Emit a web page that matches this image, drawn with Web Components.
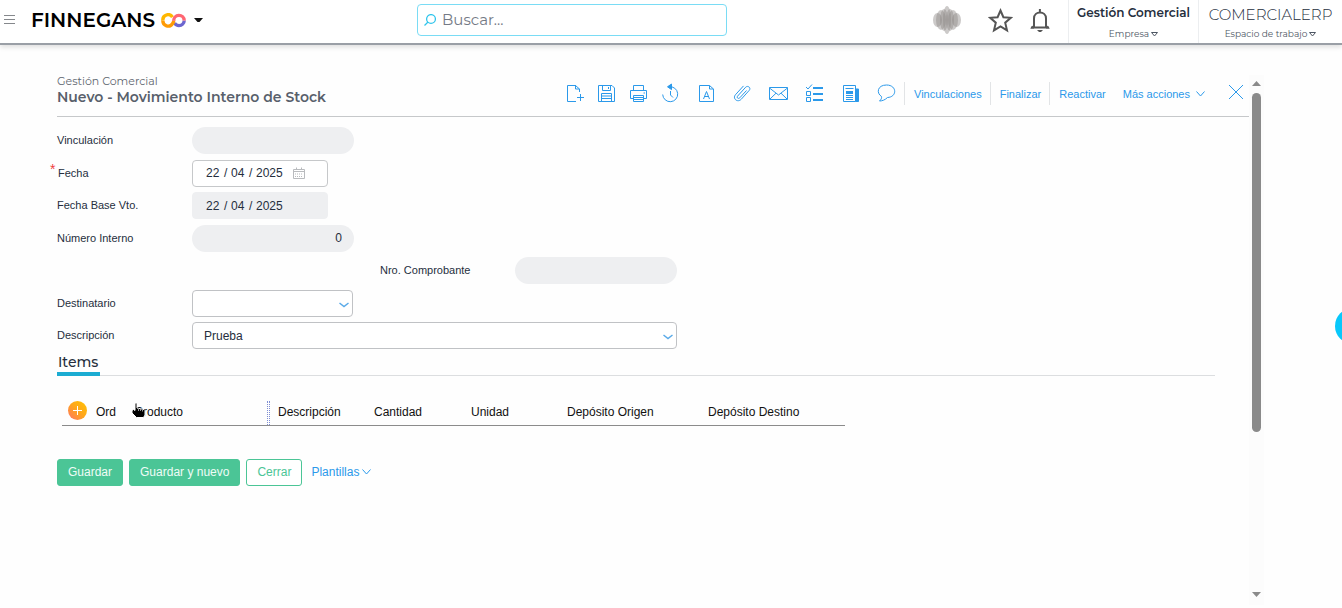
<!DOCTYPE html>
<html lang="es">
<head>
<meta charset="utf-8">
<title>Nuevo - Movimiento Interno de Stock</title>
<style>
  html, body { margin: 0; height: 100%; }
  body {
    --brand: Montserrat, Inter, "Open Sans", sans-serif;
    --ink: #252e3d;
    --blue: #2b99ea;
    --green: #4bc596;
    --line: #c6c8ca;
    --soft: #eeeff1;
    font: 12px/16px "Liberation Sans", Arial, sans-serif;
    color: var(--ink);
    background: #fefefe;
    overflow: hidden;
  }
</style>
</head>
<body>
<erp-app></erp-app>

<script>
const define = (name, html, setup) => {
  const template = document.createElement('template');
  template.innerHTML = html;
  customElements.define(name, class extends HTMLElement {
    constructor() {
      super();
      this.attachShadow({ mode: 'open' }).append(template.content.cloneNode(true));
    }
    connectedCallback() { if (setup) setup(this, this.shadowRoot); }
  });
};

const ICONS = {
  'new': '<path d="M14.500 8V5L10.500 1.500H2.500V17.500H11M10.500 1V5H14.500M15.500 10V17M12 13.500H19"/>',
  save: '<path d="M1.500 1.500H15L17.500 4V17.500H1.500ZM5.500 1.500V6.500H13.500V1.500M11.500 3V5M4.500 17V9.500H14.500V17M5 12H14M5 14.500H14"/>',
  print: '<path d="M4.500 6.500V1.500H14.500V6.500M4.500 14.500H1.500V6.500H17.500V14.500H14.500M4.500 11.500H14.500V17.500H4.500ZM5 13.500H14M5 15.500H14M14.500 9H16"/>',
  history: '<path d="M8 2.800A7.500 7.500 0 1 1 1.700 10.500M9.500 7V11L12 13.500"/><path d="M10.500 0L6.500 2.800L10.500 5.600Z" fill="currentColor"/>',
  font: '<path d="M2.500 1.500H12.500L16.500 5V17.500H2.500ZM12.500 1.500V5H16.500M6.500 15L9.500 7.500L12.500 15M7.500 12.500H11.500"/>',
  clip: '<path d="M13.500 6.500L6.800 13.800C5.200 15.400 3.300 13.600 4.700 12L12.700 3.200C15 1 18.300 4 16.200 6.400L8.200 15.300C4.700 19 -.800 14.700 2.400 10.800L10.500 1.900"/>',
  mail: '<path d="M.500 3.500H18.500V15.500H.500ZM.500 4L9.500 11L18.500 4M1 15L7 9.200M18 15L12 9.200"/>',
  list: '<path d="M1 3L3 5L7 .500M1.500 7.500H5.500V11.500H1.500ZM1.500 13.500H5.500V17.500H1.500Z"/><path d="M8 4H18M8 10H18M8 16H18" stroke-width="2"/>',
  news: '<path d="M2.500 1.500H14.500V17.500H2.500ZM4.500 4.500H12.500M5 11.500H12M5 13.500H12M5 15.500H12"/><path d="M5 8.500H12" stroke-width="3"/><path d="M15 5H17.500V17.500H14.500" fill="currentColor"/>',
  chat: '<path d="M4.500 12.500C-1 9 .500 1 9.500 1C20 1 20.500 13 10.500 13.500C8 16 5 17 2.500 17C4.300 15.500 4.800 14 4.500 12.500Z"/>'
};

define('tool-button', `
<style>
  :host { display: block; }
  button { display: grid; place-items: center; width: 100%; height: 25px; padding: 0; border: 0; background: none; color: var(--blue); }
  svg { width: 19px; height: 19px; overflow: visible; fill: none; stroke: currentColor; stroke-width: 1; }
</style>
<button type="button"><svg viewBox="0 0 19 19" aria-hidden="true"></svg></button>`,
(el, root) => {
  root.querySelector('svg').innerHTML = ICONS[el.getAttribute('icon')];
  root.querySelector('button').setAttribute('aria-label', el.getAttribute('label'));
});

define('account-switch', `
<style>
  :host { display: block; border-left: 1px solid #eceef0; text-align: center; }
  button { width: 100%; height: 100%; display: flex; flex-direction: column; align-items: center; padding: 4px 0 0; border: 0; background: none; color: var(--ink); font: 600 12px/18px var(--brand); }
  .name { height: 22px; }
  :host([light]) .name { font-size: 15px; font-weight: 300; line-height: 22px; }
  .kind { display: flex; align-items: center; gap: 2px; font-size: 9px; line-height: 16px; font-weight: 400; color: #4d5663; }
  svg { width: 7px; height: 5px; fill: none; stroke: currentColor; }
</style>
<button type="button"><span class="name"><slot></slot></span>
<span class="kind"><slot name="kind"></slot><svg viewBox="0 0 7 5"><path d="M.500 .500H6.500L3.500 4Z"/></svg></span></button>`);

define('search-box', `
<style>
  :host { display: block; }
  label { display: flex; align-items: center; gap: 6px; height: 30px; padding: 0 6px; border: 1px solid #7adcf5; border-radius: 4px; background: #fff; }
  svg { flex: none; width: 12px; height: 12px; fill: none; stroke: #30c5ec; stroke-width: 1.300; }
  input { flex: 1; min-width: 0; padding: 0; border: 0; outline: 0; background: none; font: 15px/20px var(--brand); color: var(--ink); }
  input::placeholder { color: #747a85; opacity: 1; }
</style>
<label><svg viewBox="0 0 12 12"><circle cx="7" cy="5" r="4.400"/><path d="M4 8L.500 11.500"/></svg>
<input type="text" placeholder="Buscar..." aria-label="Buscar"></label>`);

define('app-header', `
<style>
  :host { display: grid; grid-template-columns: 417fr 310px 615fr; align-items: start; height: 43px; border-bottom: 2px solid #9a9fa6; box-shadow: 0 2px 5px #0002; background: #fff; }
  .brand { display: flex; align-items: center; height: 40px; padding-left: 4px; }
  button { padding: 0; border: 0; background: none; display: flex; align-items: center; }
  .menu { width: 27px; }
  .logo { gap: 6px; color: #000; font: 600 20px/24px var(--brand); }
  .caret { margin-left: 2px; }
  search-box { margin-top: 4px; }
  .right { display: flex; height: 100%; justify-content: flex-end; }
  .marks { display: flex; align-items: center; height: 40px; margin-right: 18px; }
  .star { margin: 0 17px 0 27px; }
  .company { width: 129px; }
  .space { width: 143px; }
</style>
<div class="brand">
  <button class="menu" type="button" aria-label="Menú"><svg width="12" height="10" stroke="#85888c"><path d="M0 .500H11M0 4.500H11M0 8.500H11"/></svg></button>
  <button class="logo" type="button">FINNEGANS
    <svg width="25" height="15" viewBox="0 0 25 15" fill="none" stroke-width="3.400">
      <path d="M18 12.600A5.200 5.200 0 0 0 23.200 7.500" stroke="#6c66cf"/>
      <path d="M13.500 10A5.200 5.200 0 0 0 18 12.600" stroke="#6c66cf"/>
      <path d="M11.500 4.200A5.200 5.200 0 0 0 1.900 7.500" stroke="#ffb800"/>
      <path d="M1.900 7.500A5.200 5.200 0 0 0 11.500 10.600Q12.700 9.300 12.700 7.500" stroke="#ff9b05"/>
      <path d="M12.700 7.800A5.200 5.200 0 0 1 23.200 7.500" stroke="#ff6672"/>
    </svg>
    <svg class="caret" width="9" height="6"><path d="M0 1H9L5.500 5H3.500Z" fill="#111"/></svg>
  </button>
</div>
<search-box></search-box>
<div class="right">
  <div class="marks">
    <svg width="28" height="28" viewBox="0 0 28 28">
      <g fill="#8d8a88" fill-opacity=".45">
        <ellipse cx="4.500" cy="14" rx="4.500" ry="7"/><ellipse cx="23.500" cy="14" rx="4.500" ry="7"/>
        <ellipse cx="8" cy="14" rx="5" ry="10"/><ellipse cx="20" cy="14" rx="5" ry="10"/>
        <ellipse cx="11" cy="14" rx="4" ry="11"/><ellipse cx="17" cy="14" rx="4" ry="11"/>
        <ellipse cx="14" cy="14" rx="4" ry="14"/>
      </g>
    </svg>
    <button class="star" type="button" aria-label="Favoritos"><svg width="25" height="25" viewBox="0 0 25 25" fill="none" stroke="#555" stroke-width="2"><path d="M12.500 2.500L15.400 9.200L22.800 9.800L17.200 14.700L19 22.300L12.500 18.300L6 22.300L7.800 14.700L2.200 9.800L9.600 9.200Z"/></svg></button>
    <button type="button" aria-label="Notificaciones"><svg width="20" height="24" viewBox="0 0 20 24"><path d="M4 19V10.500C4 2.500 16 2.500 16 10.500V19M1 19.500H19M9.900 1V5" fill="none" stroke="#555" stroke-width="2"/><path d="M0 20.500L4 16.500V20.500ZM20 20.500L16 16.500V20.500ZM7 22H13L11 24H9Z" fill="#555"/></svg></button>
  </div>
  <account-switch class="company">Gestión Comercial<span slot="kind">Empresa</span></account-switch>
  <account-switch class="space" light>COMERCIALERP<span slot="kind">Espacio de trabajo</span></account-switch>
</div>`);

define('page-heading', `
<style>
  :host { display: flex; justify-content: space-between; align-items: start; height: 42px; border-bottom: 1px solid var(--line); }
  p, h1 { margin: 0; font-family: var(--brand); white-space: nowrap; }
  p { font-size: 11px; line-height: 15px; color: #5f6670; }
  h1 { font-size: 14px; line-height: 16px; font-weight: 600; color: #58606b; }
  .tools { display: flex; align-items: center; margin-top: 7px; }
  .wide { display: flex; margin-left: 2px; }
  .narrow { display: flex; }
  .narrow tool-button { width: 32px; }
  .wide tool-button { width: 36px; }
  a { display: flex; align-items: center; gap: 6px; height: 22px; padding: 1px 8px 0 9px; border-left: 1px solid #e2e4e6; font-size: 11px; color: var(--blue); text-decoration: none; white-space: nowrap; }
  a.more { border: 0; padding-right: 0; }
  svg { fill: none; stroke: var(--blue); }
  .close { padding: 0; border: 0; background: none; margin: 0 5px 4px 23px; height: 16px; }
</style>
<div><p>Gestión Comercial</p><h1>Nuevo - Movimiento Interno de Stock</h1></div>
<div class="tools">
  <div class="narrow">
    <tool-button icon="new" label="Nuevo"></tool-button><tool-button icon="save" label="Guardar"></tool-button>
    <tool-button icon="print" label="Imprimir"></tool-button><tool-button icon="history" label="Historial"></tool-button>
  </div>
  <div class="wide">
    <tool-button icon="font" label="Texto"></tool-button><tool-button icon="clip" label="Adjuntar"></tool-button>
    <tool-button icon="mail" label="Correo"></tool-button><tool-button icon="list" label="Tareas"></tool-button>
    <tool-button icon="news" label="Informe"></tool-button><tool-button icon="chat" label="Comentarios"></tool-button>
  </div>
  <a href="#vinculaciones">Vinculaciones</a><a href="#finalizar">Finalizar</a><a href="#reactivar">Reactivar</a>
  <a class="more" href="#acciones">Más acciones <svg width="9" height="6"><path d="M.500 .500L4.500 5L8.500 .500"/></svg></a>
  <button class="close" type="button" aria-label="Cerrar"><svg width="16" height="16"><path d="M1 1L15 15M15 1L1 15"/></svg></button>
</div>`);

/* One labelled form line; the control depends on the "kind" attribute. */
const CONTROLS = {
  pill: v => `<input id="c" class="pill" type="text" value="${v}" readonly>`,
  date: (v, off) => {
    const [d, m, y] = v.split('/');
    const ro = off ? 'readonly' : '';
    return `<div class="date ${off ? 'off' : ''}"><input id="c" value="${d}" ${ro}><span>/</span><input aria-label="Mes" value="${m}" ${ro}><span>/</span><input class="year" aria-label="Año" value="${y}" ${ro}>${off ? '' :
      '<svg width="12" height="12" fill="none" stroke="#b9bbbe"><path d="M.500 2.500H11.500V11.500H.500ZM.500 4.500H11.500M3.500 .500V3M8.500 .500V3"/><path d="M2 7H10M2 9.500H10" stroke-dasharray="1 1"/></svg>'}</div>`;
  },
  select: v => `<div class="pick"><select id="c"><option>${v}</option></select><svg width="10" height="6"><path d="M.500 1L5 4.500L9.500 1"/></svg></div>`
};
define('form-row', `
<style>
  :host { display: flex; align-items: center; height: 27px; }
  :host([indent]) { margin-left: 323px; }
  label { position: relative; flex: none; width: 135px; margin-bottom: 1px; font-size: 11px; line-height: 16px; }
  :host([required]) label { text-indent: 1px; }
  :host([required]) label::before { content: "*"; position: absolute; left: -8px; top: -4px; color: #ef3f3f; font-size: 14px; }
  input, select { box-sizing: border-box; padding: 0; border: 0; outline: 0; background: none; color: var(--ink); font: inherit; }
  .pill { width: 162px; height: 27px; padding: 0 12px; border-radius: 14px; background: var(--soft); text-align: right; }
  .date { box-sizing: border-box; display: flex; align-items: center; width: 136px; height: 27px; padding-left: 13px; border: 1px solid var(--line); border-radius: 4px; background: #fff; }
  .date.off { background: var(--soft); border-color: var(--soft); }
  .date input { width: 14px; height: 16px; }
  .date .year { width: 28px; }
  .date span { width: 7px; padding-left: 4px; }
  .date svg { margin-left: 9px; }
  .pick { position: relative; width: 161px; }
  :host([wide]) .pick { width: 485px; }
  select { display: block; appearance: none; width: 100%; height: 27px; padding: 0 11px; border: 1px solid #c0c2c5; border-radius: 4px; background: #fff; }
  .pick svg { position: absolute; right: 4px; top: 12px; fill: none; stroke: #5aaae8; stroke-width: 1.500; pointer-events: none; }
</style>
<label for="c"></label>`,
(el, root) => {
  const label = root.querySelector('label');
  label.textContent = el.getAttribute('label');
  label.insertAdjacentHTML('afterend', CONTROLS[el.getAttribute('kind')](el.getAttribute('value') || '', el.hasAttribute('off')));
});

define('tab-bar', `
<style>
  :host { display: flex; margin-right: 34px; border-bottom: 1px solid #dcdee0; }
  button { height: 22px; padding: 0 2px 2px 1px; margin-bottom: -1px; border: 0; border-bottom: 4px solid #1cacd2; background: none; color: var(--ink); font: 500 14px/16px var(--brand); }
</style>
<button type="button" role="tab" aria-selected="true"><slot></slot></button>`);

define('items-table', `
<style>
  :host { display: block; }
  table { width: 783px; table-layout: fixed; border-collapse: collapse; color: #111; }
  th { position: relative; height: 23px; padding: 0 0 2px; border-bottom: 1px solid #8b8b8b; font-weight: 400; text-align: left; }
  .sep { position: absolute; right: 8px; top: 1px; bottom: 0; width: 1px; border: dotted #7f8ed2; border-width: 0 1px; }
  .add { display: block; margin: -2px 0 0 6px; width: 19px; height: 19px; padding: 0; border: 0; border-radius: 50%; background: linear-gradient(45deg, #ff7468, #ffa51c 50%, #ffc400); }
  .add svg { display: block; }
  .hand { position: absolute; left: -4px; top: 2px; }
</style>
<table>
  <colgroup><col style="width:34px"><col style="width:39px"><col style="width:143px"><col style="width:96px"><col style="width:97px"><col style="width:96px"><col style="width:141px"><col></colgroup>
  <thead><tr>
    <th><button class="add" type="button" aria-label="Agregar"><svg width="19" height="19" stroke="#fff"><path d="M5 9.500H14M9.500 5V14"/></svg></button></th>
    <th>Ord</th>
    <th>Producto<i class="sep"></i>
      <svg class="hand" width="16" height="17" viewBox="0 0 16 17"><path d="M4 1.500C5 .500 6 1 6 2V6L13 7.500L14 8.500V13L12.500 15.500H5.500L1 11V8.500L2.500 7.500L4 8.500Z" fill="#000" stroke="#fff"/><path d="M7.500 6V9M9.500 6.500V9M11.500 7V9.500" stroke="#999"/></svg></th>
    <th>Descripción</th><th>Cantidad</th><th>Unidad</th><th>Depósito Origen</th><th>Depósito Destino</th>
  </tr></thead>
</table>`);

define('form-actions', `
<style>
  :host { display: flex; align-items: center; gap: 6px; }
  button { height: 27px; padding: 0 10px 2px; border: 1px solid var(--green); border-radius: 3px; background: var(--green); color: #effcf6; font: inherit; }
  button.plain { background: #fff; color: var(--green); }
  a { display: flex; align-items: center; gap: 3px; margin-left: 3px; padding-bottom: 2px; color: var(--blue); text-decoration: none; }
  svg { fill: none; stroke: var(--blue); }
</style>
<button type="button">Guardar</button><button type="button">Guardar y nuevo</button><button class="plain" type="button">Cerrar</button>
<a href="#plantillas">Plantillas<svg width="9" height="6"><path d="M.500 .500L4.500 5L8.500 .500"/></svg></a>`);

define('scroll-rail', `
<style>
  :host { display: flex; flex-direction: column; align-items: center; width: 15px; padding: 6px 0 8px; box-sizing: border-box; background: #fcfcfc; }
  svg { display: block; flex: none; fill: #8a8a8a; }
  .track { flex: 1; width: 9px; margin: 7px 0; }
  .thumb { height: 69%; border-radius: 5px; background: #8a8a8a; }
</style>
<svg width="9" height="5"><path d="M0 5L4.500 0L9 5Z"/></svg>
<div class="track"><div class="thumb"></div></div>
<svg width="9" height="5"><path d="M0 0H9L4.500 5Z"/></svg>`);

define('erp-app', `
<style>
  :host { display: flex; flex-direction: column; height: 100vh; }
  main { flex: 1; min-height: 0; display: flex; padding: 30px 78px 3px 57px; }
  .sheet { flex: 1; min-width: 0; }
  page-heading { margin-top: -1px; }
  .fields { display: flex; flex-direction: column; justify-content: space-between; min-height: 222px; margin: 10px 0 5px; }
  items-table { margin: 24px 0 33px 5px; }
  .bubble { position: fixed; right: -29px; top: 308px; width: 36px; height: 36px; padding: 0; border: 0; border-radius: 50%; background: #08c8fb; }
</style>
<app-header></app-header>
<main>
  <div class="sheet">
    <page-heading></page-heading>
    <div class="fields">
      <form-row label="Vinculación" kind="pill"></form-row>
      <form-row label="Fecha" kind="date" value="22/04/2025" required></form-row>
      <form-row label="Fecha Base Vto." kind="date" value="22/04/2025" off></form-row>
      <form-row label="Número Interno" kind="pill" value="0"></form-row>
      <form-row label="Nro. Comprobante" kind="pill" indent></form-row>
      <form-row label="Destinatario" kind="select"></form-row>
      <form-row label="Descripción" kind="select" value="Prueba" wide></form-row>
    </div>
    <tab-bar>Items</tab-bar>
    <items-table></items-table>
    <form-actions></form-actions>
  </div>
  <scroll-rail></scroll-rail>
</main>
<button class="bubble" type="button" aria-label="Ayuda"></button>`);
</script>
</body>
</html>
